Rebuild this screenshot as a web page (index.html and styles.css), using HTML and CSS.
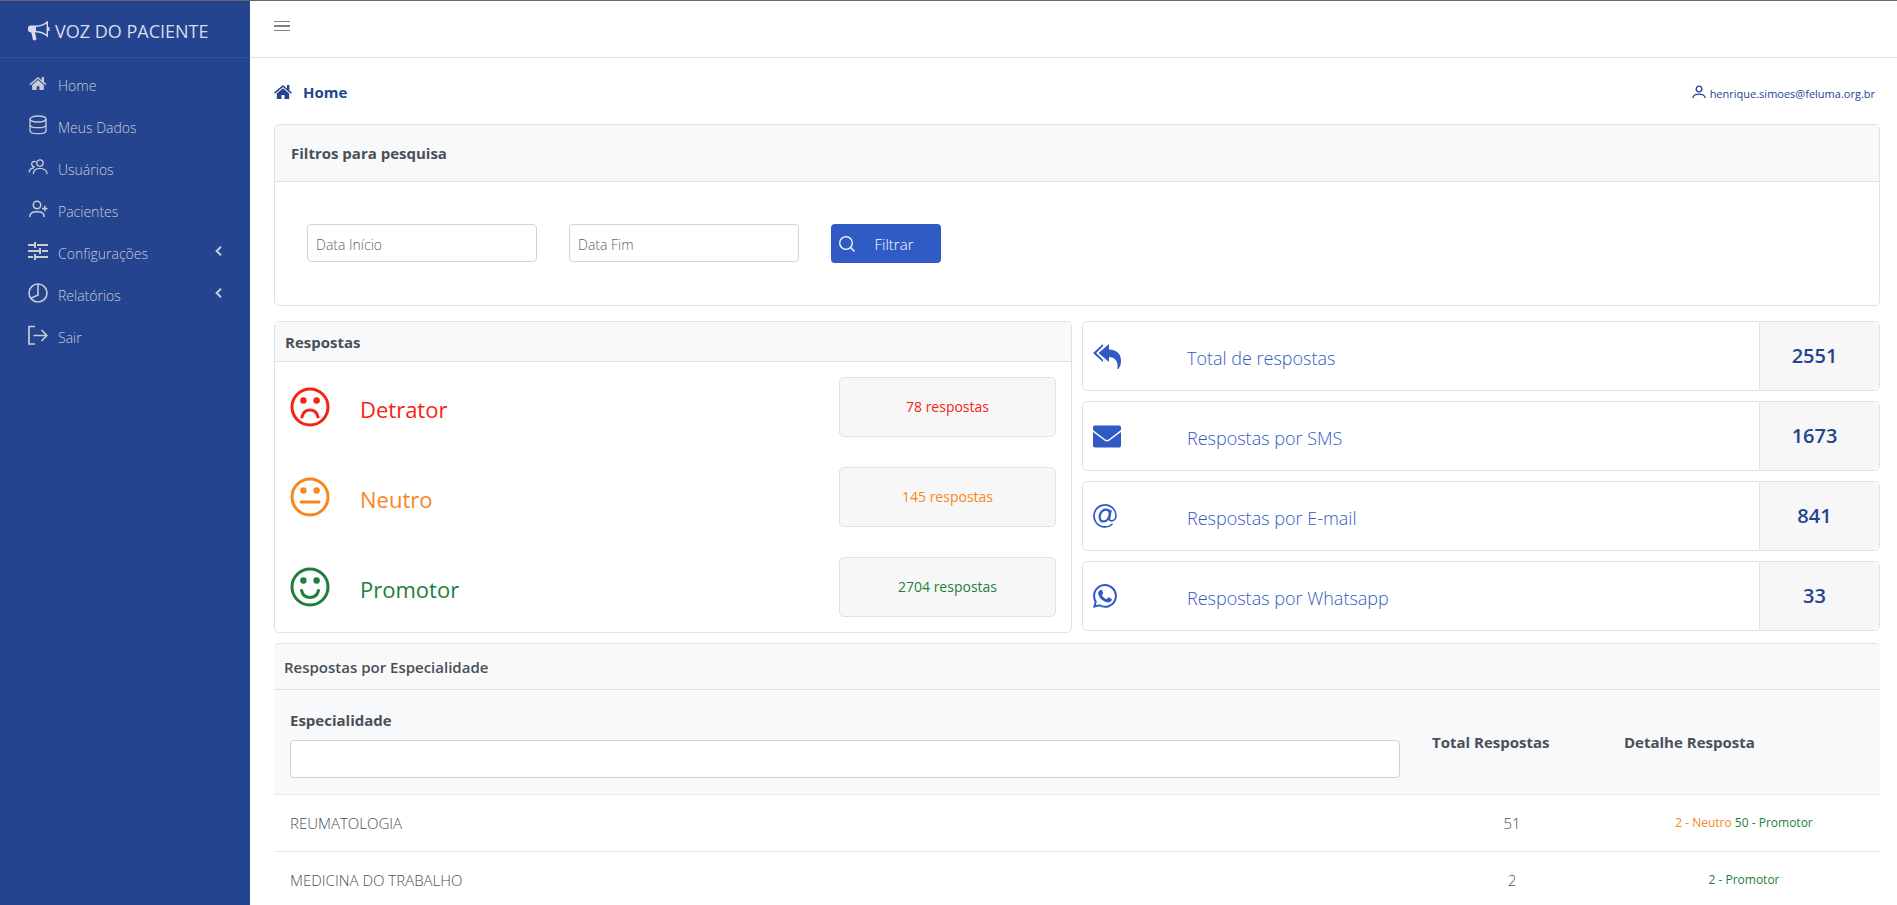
FILE: index.html
```html
<!DOCTYPE html>
<html lang="pt-BR">
<head>
<meta charset="utf-8">
<title>Voz do Paciente</title>
<link rel="stylesheet" href="styles.css">
</head>
<body>
<svg class="sprite" aria-hidden="true">
  <symbol id="i-home" viewBox="0 0 18 16"><path d="M9 1 0 8.6l1 1.2L9 3l8 6.800 1-1.200-2.600-2.200V1h-2.400v3.400z"/><path d="M9 4.200 2.800 9.500V15h4.700v-4h3v4h4.700V9.500z"/></symbol>
  <symbol id="i-db" viewBox="0 0 18 20"><g fill="none" stroke="currentColor" stroke-width="1.300"><ellipse cx="9" cy="4" rx="8" ry="3"/><path d="M1 4v11.500c0 1.800 3.500 3.200 8 3.200s8-1.400 8-3.200V4M1 9.700c0 1.700 3.500 3 8 3s8-1.300 8-3"/></g></symbol>
  <symbol id="i-users" viewBox="0 0 20 16"><g fill="none" stroke="currentColor" stroke-width="1.300"><circle cx="12" cy="4" r="3.200"/><path d="M5.200 15c.4-4 3.400-5.600 6.800-5.600s6.400 1.600 7.300 5.600M8 2.800C5 1.400 2.800 4 4 6.400c.5 1 1.500 1.700 3 1.500M1 13.500c.3-2.800 1.800-4.300 5-4.600"/></g></symbol>
  <symbol id="i-useradd" viewBox="0 0 20 18"><g fill="none" stroke="currentColor" stroke-width="1.500"><circle cx="9" cy="5" r="3.700"/><path d="M1.700 17c0-3.500 3-5.200 7.300-5.200s7.300 1.700 7.300 5.200M14 8.500h5.500M16.800 5.700v5.600"/></g></symbol>
  <symbol id="i-sliders" viewBox="0 0 20 18"><path fill="none" stroke="currentColor" stroke-width="2" d="M0 3h7M9 3h11M0 9h12M14 9h6M0 15h5M7 15h13M7 0v6M12 6v6M7 12v6"/></symbol>
  <symbol id="i-pie" viewBox="0 0 20 20"><g fill="none" stroke="currentColor" stroke-width="1.600"><circle cx="10" cy="10" r="9"/><path d="M10 1v11l-7.500 3.500"/></g></symbol>
  <symbol id="i-exit" viewBox="0 0 20 20"><g fill="none" stroke="currentColor" stroke-width="1.700"><path d="M7 1.500H1V19h6M5.500 10.500H19M13.500 5l5.300 5.500-5.300 5.500"/></g></symbol>
  <symbol id="i-horn" viewBox="0 0 22 20"><path d="M0 7c0-1.500 1-2.500 2.500-2.500H8v6.800H7l1.500 7L7 19.500 5 19l-1.700-7.500C1.300 11.500 0 10.500 0 9z"/><path fill="none" stroke="currentColor" stroke-width="1.400" d="M8 5.200C12 5.200 17 3 19.300 1v14C17 13 12 10.700 8 10.700M20.800 6v4"/></symbol>
  <symbol id="i-left" viewBox="0 0 7 10"><path fill="none" stroke="currentColor" stroke-width="2" d="M6 .8 1.600 5 6 9.200"/></symbol>
  <symbol id="i-user" viewBox="0 0 14 14"><g fill="none" stroke="currentColor" stroke-width="1.300"><circle cx="7" cy="4" r="2.800"/><path d="M.7 13C1.500 10.200 4 9.200 7 9.200s5.500 1 6.300 3.800"/></g></symbol>
  <symbol id="i-search" viewBox="0 0 16 16"><g fill="none" stroke="currentColor" stroke-width="1.300"><circle cx="7" cy="7" r="6.300"/><path d="m11.500 11.500 4 4"/></g></symbol>
  <symbol id="i-face" viewBox="0 0 40 40"><circle cx="20" cy="20" r="18" fill="none" stroke="currentColor" stroke-width="3"/><circle cx="13.400" cy="13.500" r="3.200"/><circle cx="26.600" cy="13.500" r="3.200"/></symbol>
  <symbol id="i-replyall" viewBox="0 0 28 25"><path d="M10 0v2.200L3.200 9 10 15.800V18L0 9z"/><path d="M16 0v5.500c8 .3 12 4.500 12 11.500 0 3-.8 5.500-2.600 8h-1.100c1.200-7-1.500-11.500-8.300-12v5L5.500 9z"/></symbol>
  <symbol id="i-mail" viewBox="0 0 28 22"><path d="M1.500 0h25Q28 0 28 2v2.500L16 13.800q-2 1.500-4 0L0 4.500V2Q0 0 1.500 0z"/><path d="M0 6.500 11.500 15q2.500 1.800 5 0L28 6.500V20q0 2-2 2H2q-2 0-2-2z"/></symbol>
  <symbol id="i-at" viewBox="0 0 24 24"><g fill="none" stroke="currentColor" stroke-width="1.700"><path d="M19.500 20A11 11 0 1 1 23 11.500c0 3.500-2.300 5.300-4.600 5.300-1.700 0-2.300-1-1.900-3L18 6"/><path stroke-width="2.200" d="M16.700 10c0-2.500-1.300-4.300-3.700-4.300-3.400 0-6.300 3.200-6.300 7.200 0 2.800 1.500 4.500 3.800 4.500 3.600 0 6.200-3.600 6.200-7.400z"/></g></symbol>
  <symbol id="i-whats" viewBox="0 0 16 16"><path d="M13.601 2.326A7.850 7.850 0 0 0 7.994 0C3.627 0 .068 3.558.064 7.926c0 1.399.366 2.760 1.057 3.965L0 16l4.204-1.102a7.900 7.900 0 0 0 3.790.965h.004c4.368 0 7.926-3.558 7.930-7.930A7.900 7.900 0 0 0 13.600 2.326zM7.994 14.521a6.600 6.600 0 0 1-3.356-.920l-.240-.144-2.494.654.666-2.433-.156-.251a6.560 6.560 0 0 1-1.007-3.505c0-3.626 2.957-6.584 6.591-6.584a6.560 6.560 0 0 1 4.660 1.931 6.560 6.560 0 0 1 1.928 4.660c-.004 3.639-2.961 6.592-6.592 6.592"/><path d="M4.300 4.500c.7-.8 1.600-.8 1.900 0l.6 1.500c.1.500-.4.900-.9 1.500.8 1.300 1.800 2.100 3.100 2.700l.9-1.100c.3-.3.600-.2 1 0l1.400.7c.4.200.3 1-.1 1.600-.8 1-2.200 1.100-3.600.6-2.400-.9-4.100-2.600-5-4.900-.3-1-.1-1.900.7-2.600z"/></symbol>
</svg>

<div class="app">
  <aside class="sidebar">
    <a class="brand" href="#"><svg class="brand-icon"><use href="#i-horn"/></svg>VOZ DO PACIENTE</a>
    <nav class="menu">
      <a class="menu-item" href="#"><svg class="icon-home"><use href="#i-home"/></svg><span>Home</span></a>
      <a class="menu-item" href="#"><svg><use href="#i-db"/></svg><span>Meus Dados</span></a>
      <a class="menu-item" href="#"><svg><use href="#i-users"/></svg><span>Usuários</span></a>
      <a class="menu-item" href="#"><svg><use href="#i-useradd"/></svg><span>Pacientes</span></a>
      <a class="menu-item" href="#"><svg><use href="#i-sliders"/></svg><span>Configurações</span><svg class="chevron"><use href="#i-left"/></svg></a>
      <a class="menu-item" href="#"><svg><use href="#i-pie"/></svg><span>Relatórios</span><svg class="chevron"><use href="#i-left"/></svg></a>
      <a class="menu-item" href="#"><svg><use href="#i-exit"/></svg><span>Sair</span></a>
    </nav>
  </aside>

  <div class="page">
    <header class="topbar">
      <button class="toggle" type="button" aria-label="Menu"><i></i><i></i><i></i></button>
    </header>
    <main class="content">
      <div class="heading">
        <h1 class="title"><svg><use href="#i-home"/></svg>Home</h1>
        <a class="account" href="#"><svg><use href="#i-user"/></svg><span>henrique.simoes@feluma.org.br</span></a>
      </div>

      <section class="card filters">
        <h2 class="card-head card-head-tall">Filtros para pesquisa</h2>
        <form class="filter-form">
          <input class="field" type="text" placeholder="Data Início" aria-label="Data Início">
          <input class="field" type="text" placeholder="Data Fim" aria-label="Data Fim">
          <button class="submit" type="button"><svg><use href="#i-search"/></svg><span>Filtrar</span></button>
        </form>
      </section>

      <div class="summary">
        <section class="card">
          <h2 class="card-head">Respostas</h2>
          <div class="score red">
            <svg class="face" viewBox="0 0 40 40"><use href="#i-face"/><path class="mouth" d="M12 30c1-4.500 4.200-7 8-7s7 2.500 8 7"/></svg>
            <span class="score-name">Detrator</span><span class="score-count">78 respostas</span>
          </div>
          <div class="score orange">
            <svg class="face" viewBox="0 0 40 40"><use href="#i-face"/><path class="mouth" d="M11 25h18"/></svg>
            <span class="score-name">Neutro</span><span class="score-count">145 respostas</span>
          </div>
          <div class="score green">
            <svg class="face" viewBox="0 0 40 40"><use href="#i-face"/><path class="mouth" d="M11.500 23.500c1.200 4.500 4.700 7 8.500 7s7.300-2.500 8.500-7"/></svg>
            <span class="score-name">Promotor</span><span class="score-count">2704 respostas</span>
          </div>
        </section>
        <div class="totals">
          <div class="card total"><svg class="wide"><use href="#i-replyall"/></svg><span class="total-name">Total de respostas</span><strong class="total-count">2551</strong></div>
          <div class="card total"><svg class="wide"><use href="#i-mail"/></svg><span class="total-name">Respostas por SMS</span><strong class="total-count">1673</strong></div>
          <div class="card total"><svg><use href="#i-at"/></svg><span class="total-name">Respostas por E-mail</span><strong class="total-count">841</strong></div>
          <div class="card total"><svg><use href="#i-whats"/></svg><span class="total-name">Respostas por Whatsapp</span><strong class="total-count">33</strong></div>
        </div>
      </div>

      <section class="specialties">
        <h2 class="table-title">Respostas por Especialidade</h2>
        <table class="table">
          <thead>
            <tr>
              <th class="col-name"><label for="especialidade">Especialidade</label><input class="field" id="especialidade" type="text"></th>
              <th class="col-total">Total Respostas</th>
              <th class="col-detail">Detalhe Resposta</th>
            </tr>
          </thead>
          <tbody>
            <tr><td>REUMATOLOGIA</td><td class="center">51</td><td class="center detail"><span class="orange">2 - Neutro</span> <span class="green">50 - Promotor</span></td></tr>
            <tr><td>MEDICINA DO TRABALHO</td><td class="center">2</td><td class="center detail"><span class="green">2 - Promotor</span></td></tr>
          </tbody>
        </table>
      </section>
    </main>
  </div>
</div>
</body>
</html>
```
FILE: styles.css
```css
* { box-sizing: border-box; }

body {
  margin: 0;
  background: #fff;
  color: #495057;
  font: 300 15px/24px "Open Sans", "Noto Sans", sans-serif;
}

h1, h2 { margin: 0; }
a { color: inherit; text-decoration: none; }
svg { fill: currentColor; flex: none; }
.sprite { display: none; }

.red { color: #f52314; }
.orange { color: #f8861b; }
.green { color: #1e7e3e; }

.app {
  display: flex;
  min-height: 100vh;
  border-top: 1px solid #666;
}

/* Sidebar */
.sidebar {
  flex: none;
  width: 250px;
  background: #244490;
  color: #c8ccd4;
}
.brand {
  display: flex;
  align-items: center;
  gap: 5px;
  height: 57px;
  padding: 4px 28px 0;
  border-bottom: 1px solid #2c51a8;
  color: #d8dcec;
  font-size: 18px;
  font-weight: 400;
}
.brand-icon { width: 22px; height: 20px; }
.menu {
  display: flex;
  flex-direction: column;
  padding-top: 4px;
}
.menu-item {
  display: flex;
  align-items: center;
  gap: 10px;
  height: 42px;
  padding: 0 28px;
  font-size: 14px;
}
.menu-item svg { width: 20px; height: 20px; }
.menu-item .icon-home { width: 20px; height: 15px; }
.menu-item span { padding-top: 5px; }
.menu-item .chevron {
  width: 7px;
  height: 10px;
  margin-left: auto;
}

/* Page */
.page { flex: 1; min-width: 0; }
.topbar {
  height: 57px;
  padding: 20px 24px;
  border-bottom: 1px solid #dee2e6;
}
.toggle {
  display: flex;
  flex-direction: column;
  gap: 3px;
  width: 16px;
  padding: 0;
  border: 0;
  background: none;
}
.toggle i { width: 16px; height: 1px; background: #808080; }
.toggle i:nth-child(2) { height: 2px; }
.content { padding: 16px 17px 0 24px; overflow: hidden; }

.heading {
  display: flex;
  align-items: center;
  justify-content: space-between;
  height: 36px;
  margin-bottom: 14px;
  padding-right: 5px;
  color: #244490;
}
.title {
  display: flex;
  align-items: center;
  gap: 11px;
  font-size: 15px;
  font-weight: 700;
}
.title svg { width: 18px; height: 16px; }
.account {
  display: flex;
  align-items: center;
  gap: 4px;
  font-size: 11px;
  font-weight: 400;
}
.account svg { width: 14px; height: 14px; }
.account span { padding-top: 3px; }

.card {
  border: 1px solid #dee2e6;
  border-radius: 5px;
  background: #fff;
  overflow: hidden;
}
.card-head {
  padding: 8px 10px 7px;
  border-bottom: 1px solid #dee2e6;
  background: #f8f9fb;
  font-size: 15px;
  font-weight: 700;
}
.card-head-tall { padding: 16px; }

.filter-form {
  display: grid;
  grid-template-columns: repeat(6, 1fr);
  gap: 32px;
  padding: 42px 32px;
}
.field {
  width: 100%;
  height: 38px;
  padding: 4px 8px 2px;
  border: 1px solid #ced4da;
  border-radius: 4px;
  background: #fff;
  color: #495057;
  font: inherit;
  font-size: 14px;
}
.field::placeholder { color: #5c656d; opacity: 1; }
.submit {
  display: flex;
  align-items: center;
  width: 110px;
  height: 39px;
  padding: 0 8px;
  border: 0;
  border-radius: 4px;
  background: #315bc4;
  color: #fff;
  font: inherit;
}
.submit svg { width: 16px; height: 16px; }
.submit span { flex: 1; text-align: center; }

/* Summary */
.summary {
  display: grid;
  grid-template-columns: 1fr 1fr;
  gap: 10px;
  margin: 15px 0 10px;
}
.score {
  display: flex;
  align-items: center;
  height: 90px;
  padding: 0 15px;
}
.face { width: 40px; height: 40px; }
.mouth { fill: none; stroke: currentColor; stroke-width: 3; stroke-linecap: round; }
.score-name {
  flex: 1;
  padding: 3px 0 0 30px;
  font-size: 22px;
  font-weight: 400;
}
.score-count {
  width: 217px;
  padding: 17px 0;
  border: 1px solid #dee2e6;
  border-radius: 5px;
  background: #f7f7f7;
  text-align: center;
  font-size: 14px;
  font-weight: 400;
}
.totals {
  display: flex;
  flex-direction: column;
  gap: 10px;
}
.total {
  display: grid;
  grid-template-columns: 94px 1fr 120px;
  align-items: center;
  height: 70px;
  padding-left: 10px;
  color: #315bc4;
}
.total svg { width: 24px; height: 24px; }
.total .wide { width: 28px; height: 25px; }
.total-name { padding-top: 4px; font-size: 18px; }
.total-count {
  display: grid;
  place-items: center;
  align-self: stretch;
  padding-right: 10px;
  border-left: 1px solid #dee2e6;
  background: #f7f7f7;
  color: #244490;
  font-size: 20px;
  font-weight: 600;
}

/* Table */
.table-title {
  padding: 11px 10px 10px;
  border-top: 1px solid #dee2e6;
  border-radius: 5px 5px 0 0;
  background: #f9f9f9;
  font-size: 15px;
  font-weight: 600;
}
.table {
  width: 100%;
  border-collapse: collapse;
  table-layout: fixed;
}
.table th {
  padding: 16px;
  border-top: 1px solid #dee2e6;
  background: #f8f9fb;
  text-align: left;
  font-weight: 700;
}
.table label { display: block; padding-top: 2px; margin-bottom: 8px; }
.col-total { width: 192px; }
.col-detail { width: 272px; }
.table td {
  padding: 16px;
  border-top: 1px solid #e6e8ea;
}
.table .center { text-align: center; }
.table .detail { font-size: 12px; font-weight: 400; }
```
